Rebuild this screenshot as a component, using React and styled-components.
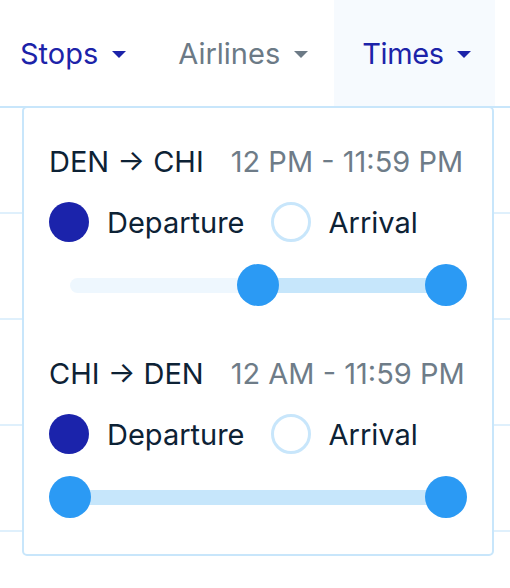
import React from "react";
import styled, { createGlobalStyle } from "styled-components";

const GlobalStyle = createGlobalStyle`
  html, body {
    margin: 0;
    padding: 0;
    background: #ffffff;
    overflow: hidden;
  }
  body {
    font-family: Inter, "Noto Sans", "Liberation Sans", sans-serif;
  }
`;

const Page = styled.div`
  position: relative;
  width: 510px;
  height: 588px;
  overflow: hidden;
`;

const Header = styled.div`
  display: flex;
  align-items: stretch;
  height: 106px;
  margin-left: -6px;
  border-bottom: 2px solid #c8e6fb;
`;

const Tab = styled.div`
  display: flex;
  align-items: center;
  gap: ${(p) => (p.$active ? 13 : 14)}px;
  padding: ${(p) => (p.$active ? "0 24px 0 28px" : "0 26px")};
  background: ${(p) => (p.$active ? "#f6fafe" : "transparent")};
  color: ${(p) => (p.$muted ? "#6c7a86" : "#1c23a9")};
  font-size: 29px;
  letter-spacing: ${(p) => (p.$active ? "-0.4px" : "0")};
  white-space: nowrap;
`;

const Caret = styled.span`
  width: 0;
  height: 0;
  border-left: 7px solid transparent;
  border-right: 7px solid transparent;
  border-top: 7px solid currentColor;
  margin-top: 2px;
`;

const Row = styled.div`
  height: 104px;
  border-bottom: 2px solid #dff0fc;
`;

const Panel = styled.div`
  position: absolute;
  top: 106px;
  left: 22px;
  width: 472px;
  box-sizing: border-box;
  background: #ffffff;
  border: 2px solid #c8e6fb;
  border-radius: 5px;
  padding: 36px 25px 36px 25px;
  display: flex;
  flex-direction: column;
  gap: 50px;
`;

const Section = styled.div`
  display: flex;
  flex-direction: column;
`;

const Title = styled.div`
  display: flex;
  align-items: center;
  height: 34px;
  gap: 27px;
  font-size: 29px;
  white-space: nowrap;
`;

const Route = styled.span`
  color: #0d2235;
`;

const Range = styled.span`
  color: #6e7c88;
`;

const Options = styled.div`
  display: flex;
  align-items: center;
  height: 40px;
  margin-top: 24px;
  gap: 26px;
`;

const Option = styled.label`
  display: flex;
  align-items: center;
  gap: 18px;
  font-size: 29px;
  color: #0d2235;
  white-space: nowrap;
`;

const Dot = styled.span`
  width: 40px;
  height: 40px;
  box-sizing: border-box;
  border-radius: 50%;
  background: ${(p) => (p.$checked ? "#1b23ab" : "#ffffff")};
  border: ${(p) => (p.$checked ? "none" : "3px solid #c8e6fb")};
`;

const Slider = styled.div`
  position: relative;
  height: 42px;
  margin-top: 22px;
  padding: 0 21px;
  display: flex;
  align-items: center;
`;

const Track = styled.div`
  position: relative;
  flex: 1;
  height: 15px;
  border-radius: 8px;
  background: #eef7fe;
`;

const Fill = styled.div`
  position: absolute;
  top: 0;
  bottom: 0;
  background: #c6e6fb;
`;

const Thumb = styled.div`
  position: absolute;
  top: 50%;
  width: 42px;
  height: 42px;
  margin: -21px 0 0 -21px;
  border-radius: 50%;
  background: #2b9af4;
`;

const legs = [
  { route: "DEN → CHI", range: "12 PM - 11:59 PM", from: 0.5, to: 1 },
  { route: "CHI → DEN", range: "12 AM - 11:59 PM", from: 0, to: 1 },
];

function RangeSlider({ from, to }) {
  return (
    <Slider>
      <Track>
        <Fill style={{ left: `${from * 100}%`, width: `${(to - from) * 100}%` }} />
        <Thumb style={{ left: `${from * 100}%` }} />
        <Thumb style={{ left: `${to * 100}%` }} />
      </Track>
    </Slider>
  );
}

export default function App() {
  return (
    <Page>
      <GlobalStyle />
      <Header>
        <Tab>
          Stops <Caret />
        </Tab>
        <Tab $muted>
          Airlines <Caret />
        </Tab>
        <Tab $active>
          Times <Caret />
        </Tab>
      </Header>
      {[0, 1, 2, 3, 4].map((i) => (
        <Row key={i} />
      ))}
      <Panel>
        {legs.map((leg) => (
          <Section key={leg.route}>
            <Title>
              <Route>{leg.route}</Route>
              <Range>{leg.range}</Range>
            </Title>
            <Options>
              <Option>
                <Dot $checked />
                Departure
              </Option>
              <Option>
                <Dot />
                Arrival
              </Option>
            </Options>
            <RangeSlider from={leg.from} to={leg.to} />
          </Section>
        ))}
      </Panel>
    </Page>
  );
}
